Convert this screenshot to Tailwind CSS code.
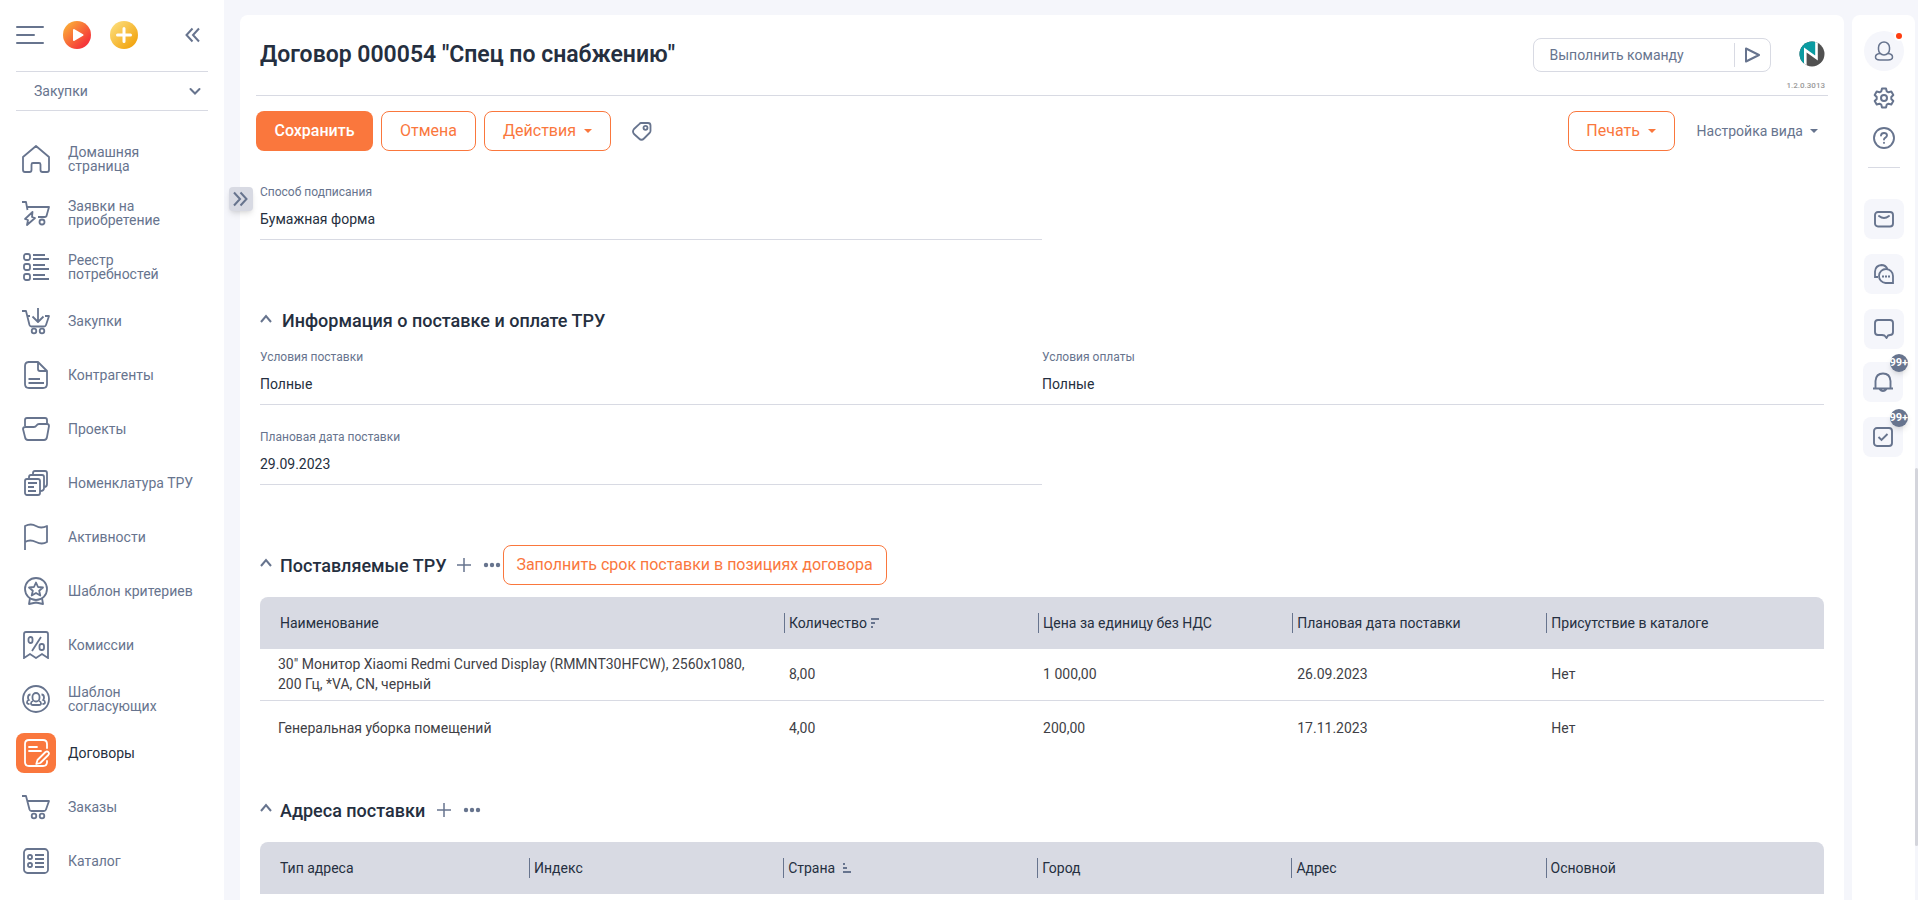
<!DOCTYPE html>
<html lang="ru">
<head>
<meta charset="utf-8">
<meta name="viewport" content="width=device-width, initial-scale=1">
<title>Договор 000054</title>
<script src="https://cdn.jsdelivr.net/npm/@tailwindcss/browser@4"></script>
</head>
<body class="h-screen overflow-hidden bg-[#f5f6fb] font-['Roboto','Noto_Sans',sans-serif] text-sm text-[#252f40]">
<div class="flex h-full">

  <aside class="flex w-56 shrink-0 flex-col bg-white px-4 text-[#67748e]">
    <div class="flex h-[71px] items-center pb-0.5">
      <button aria-label="Меню"><svg class="h-7 w-7" viewBox="0 0 28 28" stroke="#67748e" stroke-width="2" stroke-linecap="round"><path d="M1 6h26M1 14h17M1 22h26"/></svg></button>
      <button aria-label="Запуск" class="ml-[19px]"><svg class="h-7 w-7" viewBox="0 0 28 28"><defs><linearGradient id="g1" x1="0" y1="0" x2="1" y2="1"><stop offset=".1" stop-color="#fbad37"/><stop offset=".8" stop-color="#f5373a"/></linearGradient></defs><circle cx="14" cy="14" r="14" fill="url(#g1)"/><path d="M11 9l8.500 5-8.500 5z" fill="#fff" stroke="#fff" stroke-width="2" stroke-linejoin="round"/></svg></button>
      <button aria-label="Добавить" class="ml-[19px]"><svg class="h-7 w-7" viewBox="0 0 28 28"><defs><linearGradient id="g2" x1="0" y1="0" x2="1" y2="1"><stop offset=".1" stop-color="#fcdc78"/><stop offset=".85" stop-color="#f2a512"/></linearGradient></defs><circle cx="14" cy="14" r="14" fill="url(#g2)"/><path d="M14 7.500v13M7.500 14h13" stroke="#fff" stroke-width="3" stroke-linecap="round"/></svg></button>
      <button aria-label="Свернуть" class="mr-2 ml-auto"><svg class="h-4 w-4" viewBox="0 0 16 16" fill="none" stroke="#67748e" stroke-width="2"><path d="M8.500 1.500L2.500 8l6 6.500M15 1.500L9 8l6 6.500"/></svg></button>
    </div>
    <button class="flex h-10 items-center justify-between border-y border-[#d8dae3] pr-[7px] pl-[18px]"><span>Закупки</span><svg class="h-3 w-3" viewBox="0 0 12 12" fill="none" stroke="#67748e" stroke-width="2" stroke-linecap="round"><path d="M1.500 4L6 8.500 10.500 4"/></svg></button>
    <nav class="mt-[21px] flex flex-col leading-[14px]">
      <a href="#" class="flex h-[54px] items-center gap-3"><span class="flex size-10 shrink-0 items-center justify-center"><svg class="size-7" viewBox="0 0 28 28" fill="none" stroke="#67748e" stroke-width="1.800" stroke-linejoin="round"><path d="M1 25V12L14 1l13 11v13q0 2-2 2h-4.500q-2 0-2-2v-5.500q0-1.500-1.500-1.500h-6q-1.500 0-1.500 1.500V25q0 2-2 2H3q-2 0-2-2z"/></svg></span>Домашняя<br>страница</a>
      <a href="#" class="flex h-[54px] items-center gap-3"><span class="flex size-10 shrink-0 items-center justify-center"><svg class="size-7" viewBox="0 0 28 28" fill="none" stroke="#67748e" stroke-width="1.800" stroke-linejoin="round"><path d="M0 3h4l1.500 8M4.500 8H27l-2.500 9q-.5 1-1.500 1h-7M10.500 13L3 20l3 1-1 5 8-7-3-1z"/><circle cx="20" cy="23" r="2.500"/></svg></span>Заявки на<br>приобретение</a>
      <a href="#" class="flex h-[54px] items-center gap-3"><span class="flex size-10 shrink-0 items-center justify-center"><svg class="size-7" viewBox="0 0 28 28" fill="none" stroke="#67748e" stroke-width="1.800"><rect x="2" y="1" width="6" height="6" rx="2"/><rect x="2" y="11" width="6" height="6" rx="2"/><rect x="2" y="21" width="6" height="6" rx="2"/><path d="M11 2h12M11 6h16M11 12h12M11 16h16M11 22h12M11 26h16"/></svg></span>Реестр<br>потребностей</a>
      <a href="#" class="flex h-[54px] items-center gap-3"><span class="flex size-10 shrink-0 items-center justify-center"><svg class="size-7" viewBox="0 0 28 28" fill="none" stroke="#67748e" stroke-width="1.800" stroke-linejoin="round"><path d="M0 4h4l3.500 14q.5 1.500 2 1.500H22q1.500 0 2-1.500L27 9h-4M5 9h3M16 1v13M10.500 9.500L16 15l5.500-5.500"/><circle cx="12" cy="24" r="2.300"/><circle cx="20" cy="24" r="2.300"/></svg></span>Закупки</a>
      <a href="#" class="flex h-[54px] items-center gap-3"><span class="flex size-10 shrink-0 items-center justify-center"><svg class="size-7" viewBox="0 0 28 28" fill="none" stroke="#67748e" stroke-width="1.800" stroke-linejoin="round"><path d="M6 1h10l9 9v13q0 4-4 4H7q-4 0-4-4V5q0-4 4-4M16 1v7q0 2 2 2h7M6.500 18H18M6.500 22H22"/></svg></span>Контрагенты</a>
      <a href="#" class="flex h-[54px] items-center gap-3"><span class="flex size-10 shrink-0 items-center justify-center"><svg class="size-7" viewBox="0 0 28 28" fill="none" stroke="#67748e" stroke-width="1.800" stroke-linejoin="round"><path d="M3 11V5q0-2 2-2h18q2 0 2 2v4M3.500 12H12q1.500 0 2.500-1.500T17 9h8q2 0 2 2l-2 11q-.500 3-3 3H6q-2.500 0-3-3L1 14q0-2 2.500-2z"/></svg></span>Проекты</a>
      <a href="#" class="flex h-[54px] items-center gap-3"><span class="flex size-10 shrink-0 items-center justify-center"><svg class="size-7" viewBox="0 0 28 28" fill="none" stroke="#67748e" stroke-width="1.800"><rect x="3" y="10" width="15" height="16" rx="2"/><path d="M7 10V8q0-2 2-2h11q2 0 2 2v11q0 3-4 3M11 6V4q0-2 2-2h10q2 0 2 2v11q0 3-3 3M6 14h9M6 18h6M6 22h8"/></svg></span>Номенклатура ТРУ</a>
      <a href="#" class="flex h-[54px] items-center gap-3"><span class="flex size-10 shrink-0 items-center justify-center"><svg class="size-7" viewBox="0 0 28 28" fill="none" stroke="#67748e" stroke-width="1.800" stroke-linejoin="round"><path d="M3 27V3q6-3 11 0t11 0v16q-5 3-11 0t-11 0"/></svg></span>Активности</a>
      <a href="#" class="flex h-[54px] items-center gap-3"><span class="flex size-10 shrink-0 items-center justify-center"><svg class="size-7" viewBox="0 0 28 28" fill="none" stroke="#67748e" stroke-width="1.800" stroke-linejoin="round"><circle cx="14" cy="12" r="11"/><path d="M14 5.500l2 4.500 5 .5-3.800 3.300 1.100 4.700-4.300-2.500-4.300 2.500 1.100-4.700L7 10.500l5-.5zM8 21l-1 6 7-1.500 7 1.500-1-6"/></svg></span>Шаблон критериев</a>
      <a href="#" class="flex h-[54px] items-center gap-3"><span class="flex size-10 shrink-0 items-center justify-center"><svg class="size-7" viewBox="0 0 28 28" fill="none" stroke="#67748e" stroke-width="1.800"><path d="M2 27V3q0-2 2-2h20q2 0 2 2v24l-6-4-6 4-6-4zM19 6L10 20"/><rect x="6.500" y="6" width="4" height="6" rx="2"/><rect x="17.500" y="13" width="4.500" height="6" rx="2"/></svg></span>Комиссии</a>
      <a href="#" class="flex h-[54px] items-center gap-3"><span class="flex size-10 shrink-0 items-center justify-center"><svg class="size-7" viewBox="0 0 28 28" fill="none" stroke="#67748e" stroke-width="1.800"><circle cx="14" cy="14" r="13"/><rect x="10.500" y="8" width="7" height="8.500" rx="3.500"/><path d="M11 16q-2 .5-2 2.500 0 1.500 2 1.500h6q2 0 2-1.500 0-2-2-2.500M8.500 9.500q-2.500 0-2.500 3 0 1.500.8 2.500Q5 15.500 5 17.500 5 19 7.500 19M19.500 9.500q2.500 0 2.500 3 0 1.500-.8 2.500 1.800.5 1.800 2.500 0 1.500-2.500 1.500"/></svg></span>Шаблон<br>согласующих</a>
      <a href="#" class="flex h-[54px] items-center gap-3 text-[#252f40]"><span class="flex size-10 shrink-0 items-center justify-center rounded-lg bg-[#fa773d]"><svg class="size-7" viewBox="0 0 28 28" fill="none" stroke="#fff" stroke-width="1.800" stroke-linejoin="round" stroke-linecap="round"><path d="M25 9V5q0-4-4-4H7Q3 1 3 5v18q0 4 4 4h14q4 0 4-4v-1M7 8h8M7 12h12M15.500 21l8-8q1.500-1 2.800 0 1.300 1.500 0 3l-8 8-4 1z"/></svg></span>Договоры</a>
      <a href="#" class="flex h-[54px] items-center gap-3"><span class="flex size-10 shrink-0 items-center justify-center"><svg class="size-7" viewBox="0 0 28 28" fill="none" stroke="#67748e" stroke-width="1.800" stroke-linejoin="round"><path d="M0 3h4l3.500 13.500q.5 1.500 2 1.500H22q1.500 0 2-1.500L27 8H5.500"/><circle cx="12" cy="23" r="2.300"/><circle cx="20" cy="23" r="2.300"/></svg></span>Заказы</a>
      <a href="#" class="flex h-[54px] items-center gap-3"><span class="flex size-10 shrink-0 items-center justify-center"><svg class="size-7" viewBox="0 0 28 28" fill="none" stroke="#67748e" stroke-width="1.800"><rect x="2" y="2" width="24" height="24" rx="3.500"/><rect x="6" y="8" width="4" height="4" rx="1.800"/><rect x="6" y="16" width="4" height="4" rx="1.800"/><path d="M13 8h9M13 12h9M13 16h9M13 20h9"/></svg></span>Каталог</a>
    </nav>
  </aside>

  <main class="relative mt-[15px] ml-4 min-w-0 flex-1 rounded-t-lg bg-white px-4">
    <button aria-label="Развернуть панель" class="absolute top-[172px] -left-[11px] flex size-6 items-center justify-center rounded bg-[#d8dae3] shadow-md"><svg class="size-4" viewBox="0 0 16 16" fill="none" stroke="#67748e" stroke-width="2"><path d="M1 1.500L7 8l-6 6.500M7.500 1.500l6 6.500-6 6.500"/></svg></button>

    <header class="flex h-[81px] justify-between border-b border-[#d8dae3] pl-1">
      <h1 class="mt-6 text-[23px] leading-8 font-semibold">Договор 000054 "Спец по снабжению"</h1>
      <div class="flex items-start">
        <form class="mt-[23px] flex h-[34px] w-[238px] items-center rounded-lg border border-[#d8dae3]">
          <input type="text" aria-label="Выполнить команду" placeholder="Выполнить команду" class="h-full min-w-0 flex-1 pl-4 outline-none placeholder:text-[#67748e]">
          <button type="button" aria-label="Выполнить" class="flex h-6 w-9 items-center justify-center border-l border-[#d8dae3]"><svg class="size-4" viewBox="0 0 16 16" fill="none" stroke="#67748e" stroke-width="2" stroke-linejoin="round"><path d="M2 1.500L15 8 2 14.500z"/></svg></button>
        </form>
        <div class="mr-[3px] ml-4 flex flex-col items-end">
          <svg class="mt-[26px] size-[26px]" viewBox="0 0 26 26"><defs><clipPath id="disc"><circle cx="13" cy="13" r="12.500"/></clipPath></defs><g clip-path="url(#disc)"><path d="M0 0h26v26H0z" fill="#515151"/><path d="M0 0h17.500v16L6 8.500V26H0z" fill="#0a9ba1"/><path d="M6.300 27V9L17.500 17V-1" fill="none" stroke="#fff" stroke-width="2.600"/></g></svg>
          <span class="mt-[13px] text-[8px] leading-3 font-medium text-[#999]">1.2.0.3013</span>
        </div>
      </div>
    </header>

    <div class="mt-[15px] flex h-10 items-center gap-2 text-base text-[#fa773d]">
      <button class="h-10 w-[117px] rounded-lg bg-[#fa773d] font-medium text-white">Сохранить</button>
      <button class="h-10 w-[95px] rounded-lg border border-[#fa773d]">Отмена</button>
      <button class="flex h-10 w-[127px] items-center justify-center gap-2 rounded-lg border border-[#fa773d]">Действия<svg class="h-1 w-2" viewBox="0 0 8 4"><path d="M0 0h8L4 4z" fill="#fa773d"/></svg></button>
      <button aria-label="Тег" class="ml-[13px]"><svg class="size-5" viewBox="0 0 20 20" fill="none" stroke="#67748e" stroke-width="1.800" stroke-linejoin="round"><path d="M9 2h7q2.500 0 2.500 2.500V10q0 1-1 2l-5.500 5.500q-2.500 2.500-5 0L2 13q-2-2.500 0-5L7.500 2.800Q8.200 2 9 2z"/><circle cx="13.500" cy="6.800" r="2"/></svg></button>
      <button class="ml-auto flex h-10 w-[107px] items-center justify-center gap-2 rounded-lg border border-[#fa773d]">Печать<svg class="h-1 w-2" viewBox="0 0 8 4"><path d="M0 0h8L4 4z" fill="#fa773d"/></svg></button>
      <button class="mr-[10px] ml-3.5 flex items-center gap-[7px] text-sm text-[#67748e]">Настройка вида<svg class="h-1 w-2" viewBox="0 0 8 4"><path d="M0 0h8L4 4z" fill="#67748e"/></svg></button>
    </div>

    <div class="mt-[33px] px-1">
      <div class="grid grid-cols-2">
        <div class="flex flex-col"><label for="f1" class="text-xs leading-4 text-[#67748e]">Способ подписания</label><input id="f1" value="Бумажная форма" class="h-10 border-b border-[#d8dae3] pb-0.5 outline-none"></div>
      </div>

      <section class="mt-[61px]">
        <div class="flex h-10 items-center gap-[10px]">
          <button aria-label="Свернуть раздел" class="-mt-1"><svg class="size-3" viewBox="0 0 12 12" fill="none" stroke="#67748e" stroke-width="2"><path d="M1 9l5-6 5 6"/></svg></button>
          <h2 class="text-lg font-medium">Информация о поставке и оплате ТРУ</h2>
        </div>
        <div class="mt-2 grid grid-cols-2 gap-y-6">
          <div class="flex flex-col"><label for="f2" class="text-xs leading-4 text-[#67748e]">Условия поставки</label><input id="f2" value="Полные" class="h-10 border-b border-[#d8dae3] pb-0.5 outline-none"></div>
          <div class="flex flex-col"><label for="f3" class="text-xs leading-4 text-[#67748e]">Условия оплаты</label><input id="f3" value="Полные" class="h-10 border-b border-[#d8dae3] pb-0.5 outline-none"></div>
          <div class="flex flex-col"><label for="f4" class="text-xs leading-4 text-[#67748e]">Плановая дата поставки</label><input id="f4" value="29.09.2023" class="h-10 border-b border-[#d8dae3] pb-0.5 outline-none"></div>
        </div>
      </section>

      <section class="mt-15">
        <div class="flex h-10 items-center">
          <button aria-label="Свернуть раздел" class="mr-2 -mt-1"><svg class="size-3" viewBox="0 0 12 12" fill="none" stroke="#67748e" stroke-width="2"><path d="M1 9l5-6 5 6"/></svg></button>
          <h2 class="pt-0.5 text-lg font-medium">Поставляемые ТРУ</h2>
          <button aria-label="Добавить строку" class="ml-2.5"><svg class="size-3.5" viewBox="0 0 14 14" stroke="#67748e" stroke-width="1.500"><path d="M7 0v14M0 7h14"/></svg></button>
          <button aria-label="Ещё" class="ml-3"><svg class="h-4 w-[18px]" viewBox="0 0 18 16" fill="#67748e"><circle cx="3" cy="8" r="2.200"/><circle cx="9" cy="8" r="2.200"/><circle cx="15" cy="8" r="2.200"/></svg></button>
          <button class="ml-0.5 h-10 w-96 rounded-lg border border-[#fa773d] text-base text-[#fa773d]">Заполнить срок поставки в позициях договора</button>
        </div>
        <table class="mt-3 w-full table-fixed text-left">
          <colgroup><col class="w-[33.5%]"><col class="w-[16.25%]"><col class="w-[16.25%]"><col class="w-[16.25%]"><col></colgroup>
          <thead><tr class="h-13 [&_th]:bg-[#d8dae3] [&_th]:p-0 [&_th]:font-normal">
            <th class="rounded-tl-lg"><div class="pl-5">Наименование</div></th>
            <th><div class="flex h-5 items-center gap-1 border-l border-[#67748e] pl-1">Количество<svg class="h-2.5 w-2" viewBox="0 0 8 10" stroke="#67748e" stroke-width="2"><path d="M0 1h8M0 5h4M0 9h2"/></svg></div></th>
            <th><div class="flex h-5 items-center border-l border-[#67748e] pl-1">Цена за единицу без НДС</div></th>
            <th><div class="flex h-5 items-center border-l border-[#67748e] pl-1">Плановая дата поставки</div></th>
            <th class="rounded-tr-lg"><div class="flex h-5 items-center border-l border-[#67748e] pl-1">Присутствие в каталоге</div></th>
          </tr></thead>
          <tbody class="text-[#3f3f46]">
            <tr class="h-[51px] border-b border-[#d8dae3]"><td class="pr-8 pl-[18px] leading-5">30" Монитор Xiaomi Redmi Curved Display (RMMNT30HFCW), 2560x1080,<br>200 Гц, *VA, CN, черный</td><td class="pl-[5px]">8,00</td><td class="pl-[5px]">1 000,00</td><td class="pl-[5px]">26.09.2023</td><td class="pl-[5px]">Нет</td></tr>
            <tr class="h-14"><td class="pl-[18px]">Генеральная уборка помещений</td><td class="pl-[5px]">4,00</td><td class="pl-[5px]">200,00</td><td class="pl-[5px]">17.11.2023</td><td class="pl-[5px]">Нет</td></tr>
          </tbody>
        </table>
      </section>

      <section class="mt-[34px]">
        <div class="flex h-10 items-center">
          <button aria-label="Свернуть раздел" class="mr-2 -mt-1"><svg class="size-3" viewBox="0 0 12 12" fill="none" stroke="#67748e" stroke-width="2"><path d="M1 9l5-6 5 6"/></svg></button>
          <h2 class="pt-0.5 text-lg font-medium">Адреса поставки</h2>
          <button aria-label="Добавить адрес" class="ml-3"><svg class="size-3.5" viewBox="0 0 14 14" stroke="#67748e" stroke-width="1.500"><path d="M7 0v14M0 7h14"/></svg></button>
          <button aria-label="Ещё" class="ml-3"><svg class="h-4 w-[18px]" viewBox="0 0 18 16" fill="#67748e"><circle cx="3" cy="8" r="2.200"/><circle cx="9" cy="8" r="2.200"/><circle cx="15" cy="8" r="2.200"/></svg></button>
        </div>
        <table class="mt-3 w-full table-fixed text-left">
          <colgroup><col class="w-[17.2%]"><col class="w-[16.25%]"><col class="w-[16.25%]"><col class="w-[16.25%]"><col class="w-[16.25%]"><col></colgroup>
          <thead><tr class="h-13 [&_th]:bg-[#d8dae3] [&_th]:p-0 [&_th]:font-normal">
            <th class="rounded-tl-lg"><div class="pl-5">Тип адреса</div></th>
            <th><div class="flex h-5 items-center border-l border-[#67748e] pl-1">Индекс</div></th>
            <th><div class="flex h-5 items-center gap-2 border-l border-[#67748e] pl-1">Страна<svg class="h-2.5 w-2" viewBox="0 0 8 10" stroke="#67748e" stroke-width="2"><path d="M0 1h2M0 5h4M0 9h8"/></svg></div></th>
            <th><div class="flex h-5 items-center border-l border-[#67748e] pl-1">Город</div></th>
            <th><div class="flex h-5 items-center border-l border-[#67748e] pl-1">Адрес</div></th>
            <th class="rounded-tr-lg"><div class="flex h-5 items-center border-l border-[#67748e] pl-1">Основной</div></th>
          </tr></thead>
        </table>
      </section>
    </div>
  </main>

  <aside class="mt-[15px] ml-2 flex w-[63px] shrink-0 flex-col items-center rounded-t-lg bg-white">
    <button aria-label="Профиль" class="relative mt-4 flex size-10 items-center justify-center rounded-full bg-[#f5f6fb]"><svg class="size-5" viewBox="0 0 20 20" fill="none" stroke="#67748e" stroke-width="1.500"><rect x="4.500" y="1" width="11" height="13" rx="5.500"/><path d="M6 12.500Q1.500 13 1.500 16 1.500 19 6 19h8q4.500 0 4.500-3 0-3-4.500-3.500"/></svg><span class="absolute top-0.5 right-0.5 size-1.5 rounded-full bg-[#ff3d0f] ring-2 ring-white"></span></button>
    <button aria-label="Настройки" class="mt-4"><svg class="size-[22px]" viewBox="0 0 22 22" fill="none" stroke="#67748e" stroke-width="2" stroke-linejoin="round"><path d="M9 1.500h4l.7 2.800 1.800 1 2.800-.8 2 3.500-2 2v2l2 2-2 3.500-2.800-.8-1.800 1-.7 2.800H9l-.7-2.800-1.800-1-2.800.8-2-3.500 2-2v-2l-2-2 2-3.500 2.800.8 1.800-1z"/><circle cx="11" cy="11" r="3"/></svg></button>
    <button aria-label="Справка" class="mt-[18px]"><svg class="size-[22px]" viewBox="0 0 22 22" fill="none" stroke="#67748e" stroke-width="1.900" stroke-linecap="round"><circle cx="11" cy="11" r="10"/><path d="M8 8.500Q8.200 6 11 6t3 2.300q0 1.500-1.500 2.300T11 12.500M11 15.800v.1"/></svg></button>
    <hr class="mt-[18px] w-8 border-[#d8dae3]">
    <div class="mt-[31px] flex flex-col gap-[15px]">
      <button aria-label="Почта" class="flex size-10 items-center justify-center rounded-lg bg-[#f5f6fb]"><svg class="size-5" viewBox="0 0 20 20" fill="none" stroke="#67748e" stroke-width="1.900" stroke-linecap="round"><rect x="1" y="3" width="18" height="14.500" rx="3"/><path d="M5 7q5 4 10 0"/></svg></button>
      <button aria-label="Чаты" class="flex size-10 items-center justify-center rounded-lg bg-[#f5f6fb]"><svg class="size-5" viewBox="0 0 20 20" fill="none" stroke="#67748e" stroke-width="1.800"><path d="M4 13H1V7.500Q1.500 1.500 7.500 1q4 0 6 4M19 19h-7.500A7 7 0 1 1 19 12z"/><path d="M8 12.500h2M11 12.500h2M14 12.500h2"/></svg></button>
      <button aria-label="Сообщения" class="flex size-10 items-center justify-center rounded-lg bg-[#f5f6fb]"><svg class="size-5" viewBox="0 0 20 20" fill="none" stroke="#67748e" stroke-width="1.900" stroke-linejoin="round"><path d="M4 1h12q3 0 3 3v9q0 3-3 3l-2 .5-1.500 2.500-2-2.500L8 16H4q-3 0-3-3V4q0-3 3-3z"/></svg></button>
    </div>
    <div class="mt-[13px] mr-0.5 flex flex-col gap-[15px]">
      <button aria-label="Уведомления" class="relative flex size-10 items-center justify-center rounded-lg bg-[#f5f6fb]"><svg class="size-5" viewBox="0 0 20 20" fill="none" stroke="#67748e" stroke-width="1.900"><path d="M0 16.500h20M2.500 16V9Q3 1.500 10 1.500T17.500 9v7M6.500 17q3.500 4 7 0"/></svg><span class="absolute -top-2 -right-[5px] size-[18px] rounded-full bg-[#67748e] text-left text-[11px] leading-[17px] font-bold whitespace-nowrap text-white shadow-md">99+</span></button>
      <button aria-label="Задачи" class="relative flex size-10 items-center justify-center rounded-lg bg-[#f5f6fb]"><svg class="size-5" viewBox="0 0 20 20" fill="none" stroke="#67748e" stroke-width="1.900"><rect x="1" y="1" width="18" height="18" rx="3"/><path d="M5.500 10l3 3 6-6"/></svg><span class="absolute -top-2 -right-[5px] size-[18px] rounded-full bg-[#67748e] text-left text-[11px] leading-[17px] font-bold whitespace-nowrap text-white shadow-md">99+</span></button>
    </div>
  </aside>

  <div class="flex w-[3px] shrink-0 flex-col bg-[#f5f6fb]" aria-hidden="true"><div class="h-[52%]"></div><div class="h-[42%] rounded bg-[#d4d5dc]"></div></div>
</div>
</body>
</html>
